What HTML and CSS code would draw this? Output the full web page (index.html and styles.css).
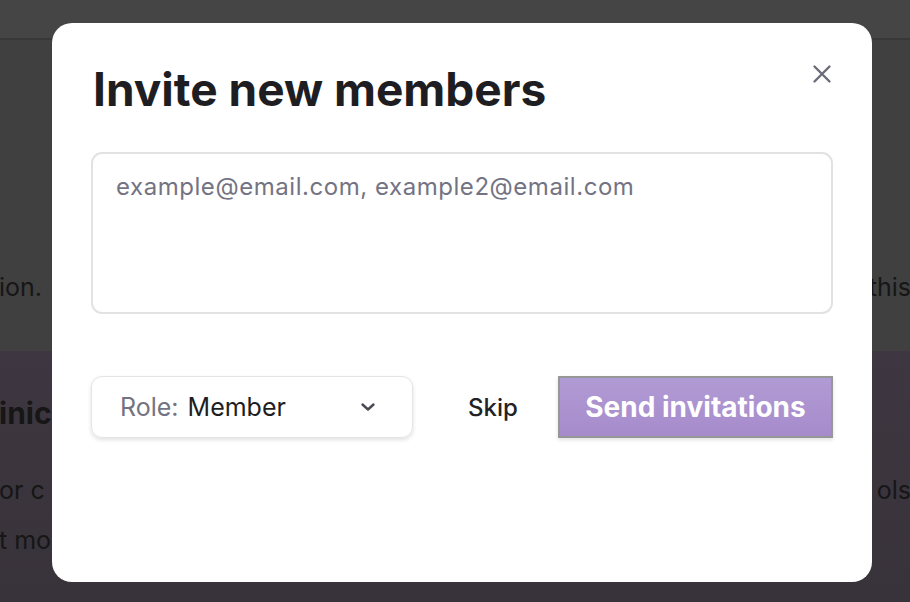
FILE: index.html
```html
<!DOCTYPE html>
<html lang="en">
<head>
<meta charset="utf-8">
<title>Invite new members</title>
<link rel="stylesheet" href="styles.css">
</head>
<body>
<div class="page">
  <header class="topbar"></header>
  <section class="intro">
    <div class="line">
      <span class="left">ion.</span>
      <span class="right">this</span>
    </div>
  </section>
  <section class="feature">
    <div class="line heading"><span class="left">inic</span></div>
    <div class="line body-line"><span class="left">or c</span><span class="right">ols</span></div>
    <div class="line body-line"><span class="left">t mo</span></div>
  </section>

  <div class="modal" role="dialog" aria-labelledby="invite-title">
    <div class="modal-head">
      <h1 id="invite-title" class="modal-title">Invite new members</h1>
      <button class="close" aria-label="Close">
        <svg width="20" height="20" viewBox="0 0 20 20"><path d="M2.5 2.5 L17.5 17.5 M17.5 2.5 L2.5 17.5" stroke="#6b6b7a" stroke-width="2.4" stroke-linecap="round" fill="none"/></svg>
      </button>
    </div>
    <textarea class="emails" placeholder="example@email.com, example2@email.com"></textarea>
    <div class="actions">
      <div class="role">
        <span class="role-label">Role:</span>
        <span class="role-value">Member</span>
        <svg class="chev" width="16" height="10" viewBox="0 0 16 10"><path d="M2.5 2.5 L8 7.5 L13.5 2.5" stroke="#4a4a52" stroke-width="2.4" stroke-linecap="round" stroke-linejoin="round" fill="none"/></svg>
      </div>
      <button class="skip">Skip</button>
      <button class="send">Send invitations</button>
    </div>
  </div>
</div>
</body>
</html>
```

FILE: styles.css
```css
* { box-sizing: border-box; }
html, body { margin: 0; padding: 0; }
body {
  width: 910px;
  height: 602px;
  overflow: hidden;
  font-family: Inter, "Noto Sans", "Liberation Sans", sans-serif;
  background: #3f3f3f;
}
.page {
  position: relative;
  width: 910px;
  height: 602px;
  overflow: hidden;
}
.topbar {
  height: 40px;
  background: #454545;
  border-bottom: 2px solid #383838;
}
.intro {
  height: 311px;
  background: #404040;
  padding-top: 232px;
}
.feature {
  height: 251px;
  background: linear-gradient(180deg, #3e3741 0%, #38323a 100%);
  padding-top: 44px;
}
.line {
  display: flex;
  justify-content: space-between;
  font-size: 25px;
  color: #161616;
  white-space: nowrap;
}
.line .left { margin-left: -1px; }
.line .right { margin-right: -1px; }
.heading { font-size: 30px; font-weight: 700; height: 40px; }
.body-line { height: 50px; }
.feature .heading { margin-bottom: 40px; }

.modal {
  position: absolute;
  left: 52px;
  top: 23px;
  width: 820px;
  height: 559px;
  background: #ffffff;
  border-radius: 20px;
  padding: 0 39px;
}
.modal-head {
  display: flex;
  justify-content: space-between;
  align-items: flex-start;
  height: 129px;
}
.modal-title {
  margin: 38px 0 0 2px;
  font-size: 46px;
  font-weight: 700;
  letter-spacing: 0;
  color: #1e1e22;
}
.close {
  margin: 41px 1px 0 0;
  width: 20px;
  height: 20px;
  padding: 0;
  border: 0;
  background: none;
}
.emails {
  display: block;
  width: 742px;
  height: 162px;
  border: 2px solid #e2e2e4;
  border-radius: 11px;
  padding: 18px 23px;
  resize: none;
  font-family: Inter, "Noto Sans", sans-serif;
  font-size: 24px;
  letter-spacing: 0.55px;
  color: #222;
}
.emails::placeholder { color: #737383; }
.actions {
  display: flex;
  align-items: center;
  margin-top: 62px;
}
.role {
  flex: 0 0 322px;
  height: 62px;
  display: flex;
  align-items: center;
  padding: 0 36px 0 28px;
  border: 1.5px solid #e4e4e6;
  border-radius: 11px;
  box-shadow: 0 2px 4px rgba(0,0,0,0.12);
  font-size: 25px;
}
.role-label { color: #737383; margin-right: 9px; }
.role-value { color: #1e1e22; flex: 1; }
.skip {
  margin-left: 55px;
  width: 51px;
  padding: 0;
  border: 0;
  background: none;
  font-family: inherit;
  font-size: 24px;
  font-weight: 500;
  color: #222226;
  text-align: left;
  white-space: nowrap;
}
.send {
  margin-left: 39px;
  width: 275px;
  height: 62px;
  border: 2px solid #979797;
  background: linear-gradient(180deg, #b19bd4 0%, #a68bcb 100%);
  box-shadow: 0 2px 4px rgba(0,0,0,0.12);
  font-family: inherit;
  font-size: 28px;
  font-weight: 700;
  color: #ffffff;
  padding: 0;
}
```
